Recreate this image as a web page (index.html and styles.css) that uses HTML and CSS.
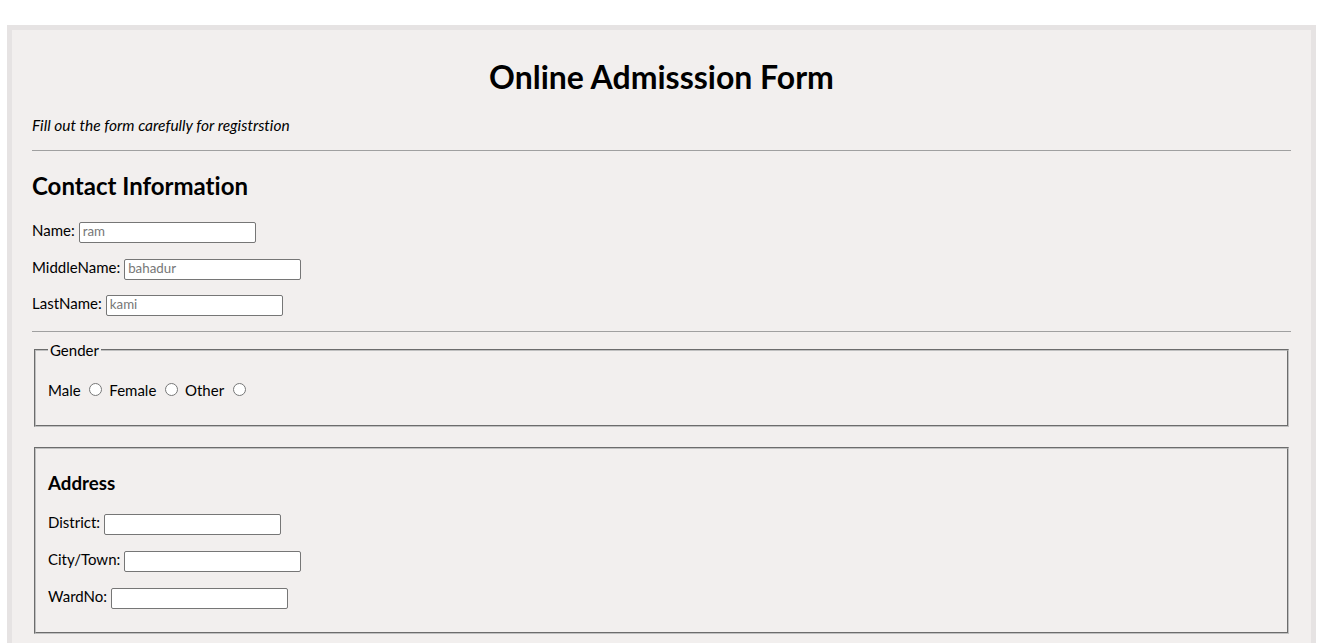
FILE: index.html
```html
<!DOCTYPE html>
<html lang="en">
<head>
<meta charset="utf-8">
<title>Online Admission Form</title>
<link rel="stylesheet" href="styles.css">
</head>
<body>
<form class="form-wrap">
  <h1 class="title">Online Admisssion Form</h1>
  <p class="lead">Fill out the form carefully for registrstion</p>
  <hr class="rule">
  <h2 class="section-title">Contact Information</h2>
  <div class="field first"><label for="fname">Name:</label><input class="text" id="fname" type="text" placeholder="ram"></div>
  <div class="field"><label for="mname">MiddleName:</label><input class="text" id="mname" type="text" placeholder="bahadur"></div>
  <div class="field"><label for="lname">LastName:</label><input class="text" id="lname" type="text" placeholder="kami"></div>
  <hr class="rule rule-2">
  <fieldset class="box gender">
    <legend class="legend">Gender</legend>
    <p class="choices">Male <input class="radio" type="radio" name="gender"> Female <input class="radio" type="radio" name="gender"> Other <input class="radio" type="radio" name="gender"></p>
  </fieldset>
  <fieldset class="box address">
    <h3 class="sub-title">Address</h3>
    <div class="field first-addr"><label for="district">District:</label><input class="text" id="district" type="text"></div>
    <div class="field"><label for="city">City/Town:</label><input class="text" id="city" type="text"></div>
    <div class="field"><label for="ward">WardNo:</label><input class="text" id="ward" type="text"></div>
  </fieldset>
</form>
</body>
</html>
```
FILE: styles.css
```css
html, body {
  margin: 0;
  padding: 0;
  background: #ffffff;
}
body {
  font-family: Lato, "Noto Sans", sans-serif;
  font-variant-ligatures: no-common-ligatures;
  color: #000;
  font-size: 15px;
}
.form-wrap {
  display: block;
  margin: 25px 21px 0 7px;
  border: 5px solid #e6e3e3;
  background: #f2efee;
  padding: 0 20px 20px;
}
.title {
  font-size: 32px;
  line-height: 40px;
  font-weight: 700;
  text-align: center;
  margin: 27px 0 18px;
}
.lead {
  font-size: 15.5px;
  font-style: italic;
  line-height: 20px;
  margin: 0;
}
.rule {
  border: 0;
  border-top: 1px solid #a0a0a0;
  height: 0;
  margin: 15px 0 0;
}
.rule-2 {
  margin-top: 15px;
}
.section-title {
  font-size: 24px;
  line-height: 30px;
  font-weight: 700;
  margin: 20px 0 0;
}
.field {
  display: flex;
  align-items: baseline;
  gap: 4px;
  margin-top: 13.7px;
  line-height: 20px;
}
.field.first {
  margin-top: 19px;
}
.text {
  box-sizing: border-box;
  width: 177px;
  height: 21px;
  padding: 0 3px 3px;
  margin: 0;
  font-family: Lato, "Noto Sans", sans-serif;
  font-size: 13.33px;
  border: 1px solid #767676;
  border-radius: 2px;
  background: #fff;
  color: #000;
}
.text::placeholder {
  color: #777;
}
.box {
  margin: 8px 2px 0;
  border: 2px groove #c0c0c0;
  padding: 4px 12px 9px;
  min-width: 0;
}
.legend {
  padding: 0 2px;
  line-height: 20px;
  font-size: 15px;
}
.choices {
  margin: 16px 0;
  line-height: 20px;
}
.radio {
  width: 13px;
  height: 13px;
  margin: 3px 3px 0 5px;
}
.address {
  margin-top: 20px;
  padding: 4px 12px 23px;
}
.sub-title {
  font-size: 18.72px;
  line-height: 23px;
  font-weight: 700;
  margin: 19px 0 0;
}
.field.first-addr {
  margin-top: 16.5px;
}
.address .field:not(.first-addr) {
  margin-top: 14.2px;
}
```
